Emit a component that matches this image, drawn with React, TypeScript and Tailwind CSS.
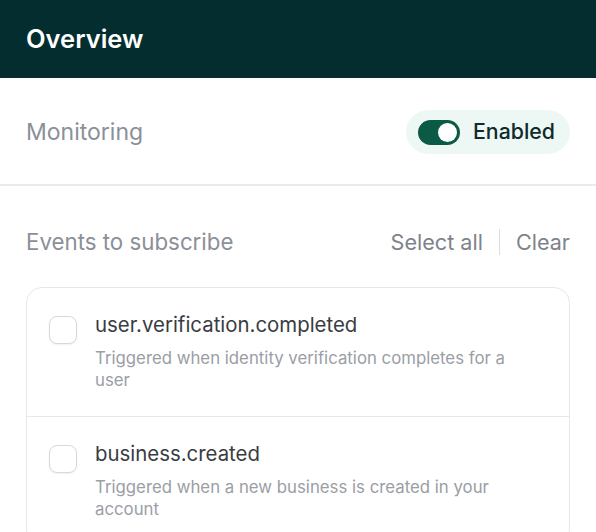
import { useState } from "react";

type EventItem = { name: string; desc: string };

const EVENTS: EventItem[] = [
  { name: "user.verification.completed", desc: "Triggered when identity verification completes for a user" },
  { name: "business.created", desc: "Triggered when a new business is created in your account" },
];

export default function App() {
  const [enabled, setEnabled] = useState(true);
  const [picked, setPicked] = useState<string[]>([]);

  const toggle = (n: string) =>
    setPicked((p) => (p.includes(n) ? p.filter((x) => x !== n) : [...p, n]));

  return (
    <div className="min-h-screen w-full bg-white font-['Inter',sans-serif]">
      <header className="flex h-[78px] items-center bg-[#032d2e] px-[26px]">
        <h1 className="text-[25.5px] font-semibold text-white">Overview</h1>
      </header>

      <div className="flex h-[108px] items-center justify-between border-b-2 border-[#ebebec] px-[26px] pt-[2px]">
        <span className="text-[23px] text-[#8b9098]">Monitoring</span>
        <button
          onClick={() => setEnabled(!enabled)}
          className="flex h-[44px] items-center gap-[13px] rounded-full bg-[#edf8f4] pl-[12px] pr-[15px]"
        >
          <span
            className={`flex h-[25px] w-[42px] items-center rounded-full px-[3px] ${
              enabled ? "justify-end bg-[#0a5a45]" : "justify-start bg-gray-300"
            }`}
          >
            <span className="h-[19px] w-[19px] rounded-full bg-white" />
          </span>
          <span className="text-[21.3px] font-medium text-[#0f2b2a]">{enabled ? "Enabled" : "Disabled"}</span>
        </button>
      </div>

      <div className="px-[26px] pt-[39px]">
        <div className="flex items-center justify-between">
          <span className="text-[22.3px] text-[#8b9098]">Events to subscribe</span>
          <div className="flex items-center text-[21.6px] text-[#7e838b]">
            <button onClick={() => setPicked(EVENTS.map((e) => e.name))}>Select all</button>
            <span className="mx-[16px] h-[26px] w-px bg-[#dcdee0]" />
            <button onClick={() => setPicked([])}>Clear</button>
          </div>
        </div>

        <div className="mt-[29px] rounded-[16px] border border-[#e6e7e9]">
          {EVENTS.map((ev, i) => (
            <label
              key={ev.name}
              className={`flex cursor-pointer gap-[18px] pb-[25px] pl-[22px] pr-[32px] pt-[24px] ${
                i > 0 ? "border-t border-[#e6e7e9]" : ""
              }`}
            >
              <input
                type="checkbox"
                checked={picked.includes(ev.name)}
                onChange={() => toggle(ev.name)}
                className="mt-[4px] h-[28px] w-[28px] shrink-0 appearance-none rounded-[8px] border-[1.5px] border-[#d6d8db] bg-white shadow-[0_1px_2px_rgba(0,0,0,0.06)] checked:border-[#0a5a45] checked:bg-[#0a5a45]"
              />
              <div>
                <div className="text-[20.4px] leading-[26px] text-[#393c41]">{ev.name}</div>
                <p className="mt-[9px] text-[16.8px] leading-[22px] text-[#9a9ea5]">{ev.desc}</p>
              </div>
            </label>
          ))}
        </div>
      </div>
    </div>
  );
}
